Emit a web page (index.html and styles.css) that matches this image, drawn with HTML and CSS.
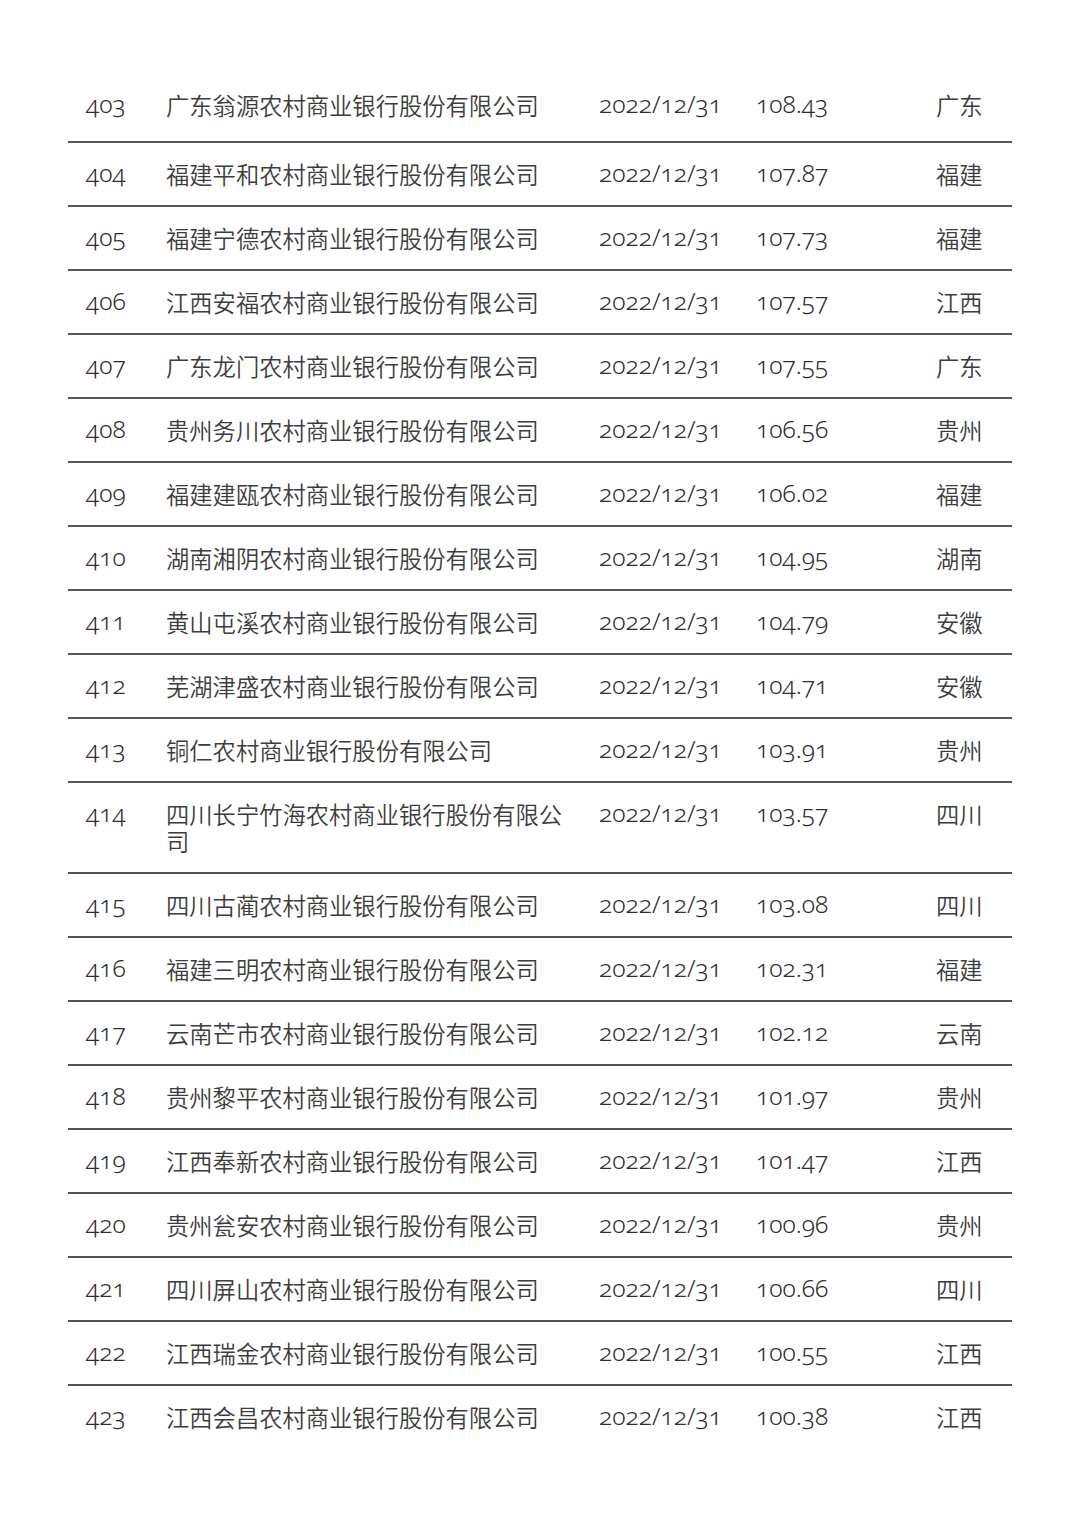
FILE: index.html
```html
<!DOCTYPE html>
<html lang="zh-CN">
<head>
<meta charset="utf-8">
<title>农村商业银行</title>
<link rel="stylesheet" href="styles.css">
</head>
<body>
<div class="table">
  <div class="row first"><span class="c-no">403</span><span class="c-name">广东翁源农村商业银行股份有限公司</span><span class="c-date">2022/12/31</span><span class="c-val">108.43</span><span class="c-prov">广东</span></div>
  <div class="row"><span class="c-no">404</span><span class="c-name">福建平和农村商业银行股份有限公司</span><span class="c-date">2022/12/31</span><span class="c-val">107.87</span><span class="c-prov">福建</span></div>
  <div class="row"><span class="c-no">405</span><span class="c-name">福建宁德农村商业银行股份有限公司</span><span class="c-date">2022/12/31</span><span class="c-val">107.73</span><span class="c-prov">福建</span></div>
  <div class="row"><span class="c-no">406</span><span class="c-name">江西安福农村商业银行股份有限公司</span><span class="c-date">2022/12/31</span><span class="c-val">107.57</span><span class="c-prov">江西</span></div>
  <div class="row"><span class="c-no">407</span><span class="c-name">广东龙门农村商业银行股份有限公司</span><span class="c-date">2022/12/31</span><span class="c-val">107.55</span><span class="c-prov">广东</span></div>
  <div class="row"><span class="c-no">408</span><span class="c-name">贵州务川农村商业银行股份有限公司</span><span class="c-date">2022/12/31</span><span class="c-val">106.56</span><span class="c-prov">贵州</span></div>
  <div class="row"><span class="c-no">409</span><span class="c-name">福建建瓯农村商业银行股份有限公司</span><span class="c-date">2022/12/31</span><span class="c-val">106.02</span><span class="c-prov">福建</span></div>
  <div class="row"><span class="c-no">410</span><span class="c-name">湖南湘阴农村商业银行股份有限公司</span><span class="c-date">2022/12/31</span><span class="c-val">104.95</span><span class="c-prov">湖南</span></div>
  <div class="row"><span class="c-no">411</span><span class="c-name">黄山屯溪农村商业银行股份有限公司</span><span class="c-date">2022/12/31</span><span class="c-val">104.79</span><span class="c-prov">安徽</span></div>
  <div class="row"><span class="c-no">412</span><span class="c-name">芜湖津盛农村商业银行股份有限公司</span><span class="c-date">2022/12/31</span><span class="c-val">104.71</span><span class="c-prov">安徽</span></div>
  <div class="row"><span class="c-no">413</span><span class="c-name">铜仁农村商业银行股份有限公司</span><span class="c-date">2022/12/31</span><span class="c-val">103.91</span><span class="c-prov">贵州</span></div>
  <div class="row"><span class="c-no">414</span><span class="c-name">四川长宁竹海农村商业银行股份有限公司</span><span class="c-date">2022/12/31</span><span class="c-val">103.57</span><span class="c-prov">四川</span></div>
  <div class="row"><span class="c-no">415</span><span class="c-name">四川古蔺农村商业银行股份有限公司</span><span class="c-date">2022/12/31</span><span class="c-val">103.08</span><span class="c-prov">四川</span></div>
  <div class="row"><span class="c-no">416</span><span class="c-name">福建三明农村商业银行股份有限公司</span><span class="c-date">2022/12/31</span><span class="c-val">102.31</span><span class="c-prov">福建</span></div>
  <div class="row"><span class="c-no">417</span><span class="c-name">云南芒市农村商业银行股份有限公司</span><span class="c-date">2022/12/31</span><span class="c-val">102.12</span><span class="c-prov">云南</span></div>
  <div class="row"><span class="c-no">418</span><span class="c-name">贵州黎平农村商业银行股份有限公司</span><span class="c-date">2022/12/31</span><span class="c-val">101.97</span><span class="c-prov">贵州</span></div>
  <div class="row"><span class="c-no">419</span><span class="c-name">江西奉新农村商业银行股份有限公司</span><span class="c-date">2022/12/31</span><span class="c-val">101.47</span><span class="c-prov">江西</span></div>
  <div class="row"><span class="c-no">420</span><span class="c-name">贵州瓮安农村商业银行股份有限公司</span><span class="c-date">2022/12/31</span><span class="c-val">100.96</span><span class="c-prov">贵州</span></div>
  <div class="row"><span class="c-no">421</span><span class="c-name">四川屏山农村商业银行股份有限公司</span><span class="c-date">2022/12/31</span><span class="c-val">100.66</span><span class="c-prov">四川</span></div>
  <div class="row"><span class="c-no">422</span><span class="c-name">江西瑞金农村商业银行股份有限公司</span><span class="c-date">2022/12/31</span><span class="c-val">100.55</span><span class="c-prov">江西</span></div>
  <div class="row last"><span class="c-no">423</span><span class="c-name">江西会昌农村商业银行股份有限公司</span><span class="c-date">2022/12/31</span><span class="c-val">100.38</span><span class="c-prov">江西</span></div>
</div>
</body>
</html>
```

FILE: styles.css
```css
html, body {
  margin: 0;
  padding: 0;
  background: #ffffff;
}
body {
  width: 1080px;
  height: 1528px;
  overflow: hidden;
}
.table {
  margin: 74px 0 0 68px;
  width: 944px;
}
.row {
  display: grid;
  grid-template-columns: 80px 433px 157px 180px 1fr;
  padding: 18px 0 17px 18px;
  border-bottom: 2px solid #555555;
  line-height: 27px;
  font-size: 23.3px;
  color: #3a3a3a;
}
.row.first {
  padding-bottom: 22px;
}
.row.last {
  border-bottom: none;
}
.c-no, .c-date, .c-val {
  font-family: "Noto Sans", "Open Sans", sans-serif;
  font-variant-numeric: oldstyle-nums;
  font-weight: 350;
  font-size: 24.6px;
  color: #2e2e2e;
  margin-top: -2px;
}
.c-name, .c-prov {
  font-family: "Noto Sans CJK SC", sans-serif;
  font-weight: 350;
  color: #3c3c3c;
}
.c-name {
  padding-right: 20px;
}
```
